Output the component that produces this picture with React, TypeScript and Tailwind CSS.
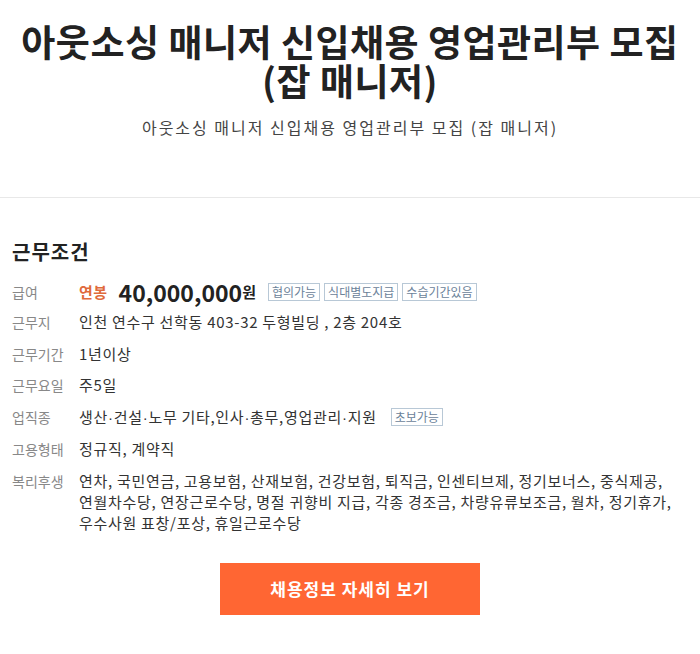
const font = { fontFamily: '"Noto Sans CJK KR", "Noto Sans", sans-serif' };

type Row = { label: string; value: React.ReactNode };

const Tag = ({ children }: { children: React.ReactNode }) => (
  <span className="inline-block border border-[#b8c8d6] px-[3px] text-[12px] leading-[16px] tracking-normal text-[#6b8299]">
    {children}
  </span>
);

// narrow middle dot, the CJK font draws it full width
const Dot = () => <span style={{ fontFamily: '"Liberation Sans", sans-serif' }}>·</span>;

const rows: Row[] = [
  {
    label: "근무지",
    value: "인천 연수구 선학동 403-32 두형빌딩 , 2층 204호",
  },
  { label: "근무기간", value: "1년이상" },
  { label: "근무요일", value: "주5일" },
  {
    label: "업직종",
    value: (
      <span className="flex items-center gap-[14px]">
        <span>
          생산<Dot />건설<Dot />노무 기타,인사<Dot />총무,영업관리<Dot />지원
        </span>
        <Tag>초보가능</Tag>
      </span>
    ),
  },
  { label: "고용형태", value: "정규직, 계약직" },
  {
    label: "복리후생",
    value: (
      <span className="flex flex-col leading-[21px]">
        <span>연차, 국민연금, 고용보험, 산재보험, 건강보험, 퇴직금, 인센티브제, 정기보너스, 중식제공,</span>
        <span>연월차수당, 연장근로수당, 명절 귀향비 지급, 각종 경조금, 차량유류보조금, 월차, 정기휴가,</span>
        <span>우수사원 표창/포상, 휴일근로수당</span>
      </span>
    ),
  },
];

export default function App() {
  return (
    <div className="w-[700px] bg-white text-[#222]" style={font}>
      <div className="pt-[22px] text-center">
        <h1 className="text-[37px] font-bold leading-[39px] tracking-[0.5px] text-[#222]">
          아웃소싱 매니저 신입채용 영업관리부 모집
          <br />
          (잡 매니저)
        </h1>
        <p className="mt-[16px] text-[16px] leading-[22px] tracking-[2px] text-[#444]">
          아웃소싱 매니저 신입채용 영업관리부 모집 (잡 매니저)
        </p>
      </div>

      <div className="mt-[59px] border-t border-[#e8e8e8]" />

      <section className="px-[12px] pt-[41px]">
        <h2 className="text-[20px] font-bold leading-[26px] tracking-[1px] text-[#222]">근무조건</h2>

        <div className="mt-[12px] flex h-[30px] items-center">
          <span className="w-[67px] shrink-0 text-[14px] text-[#888]">급여</span>
          <span className="text-[15px] font-bold tracking-[0.5px] text-[#e06a3c]">연봉</span>
          <span className="ml-[11px] text-[23px] font-bold leading-[30px] text-[#222]">40,000,000</span>
          <span className="text-[15px] font-bold text-[#222]">원</span>
          <span className="ml-[12px] flex gap-[4px]">
            <Tag>협의가능</Tag>
            <Tag>식대별도지급</Tag>
            <Tag>수습기간있음</Tag>
          </span>
        </div>

        <div className="mt-[4px] flex flex-col gap-[9.5px]">
          {rows.map((r) => (
            <div key={r.label} className="flex text-[15px] leading-[22px]">
              <span className="w-[67px] shrink-0 text-[14px] text-[#888]">{r.label}</span>
              <span className="tracking-[0.7px] text-[#333]">{r.value}</span>
            </div>
          ))}
        </div>

        <div className="flex justify-center pb-[40px] pt-[30px]">
          <button className="h-[52px] w-[260px] bg-[#ff6633] text-[17px] font-bold tracking-[1px] text-white">
            채용정보 자세히 보기
          </button>
        </div>
      </section>
    </div>
  );
}
